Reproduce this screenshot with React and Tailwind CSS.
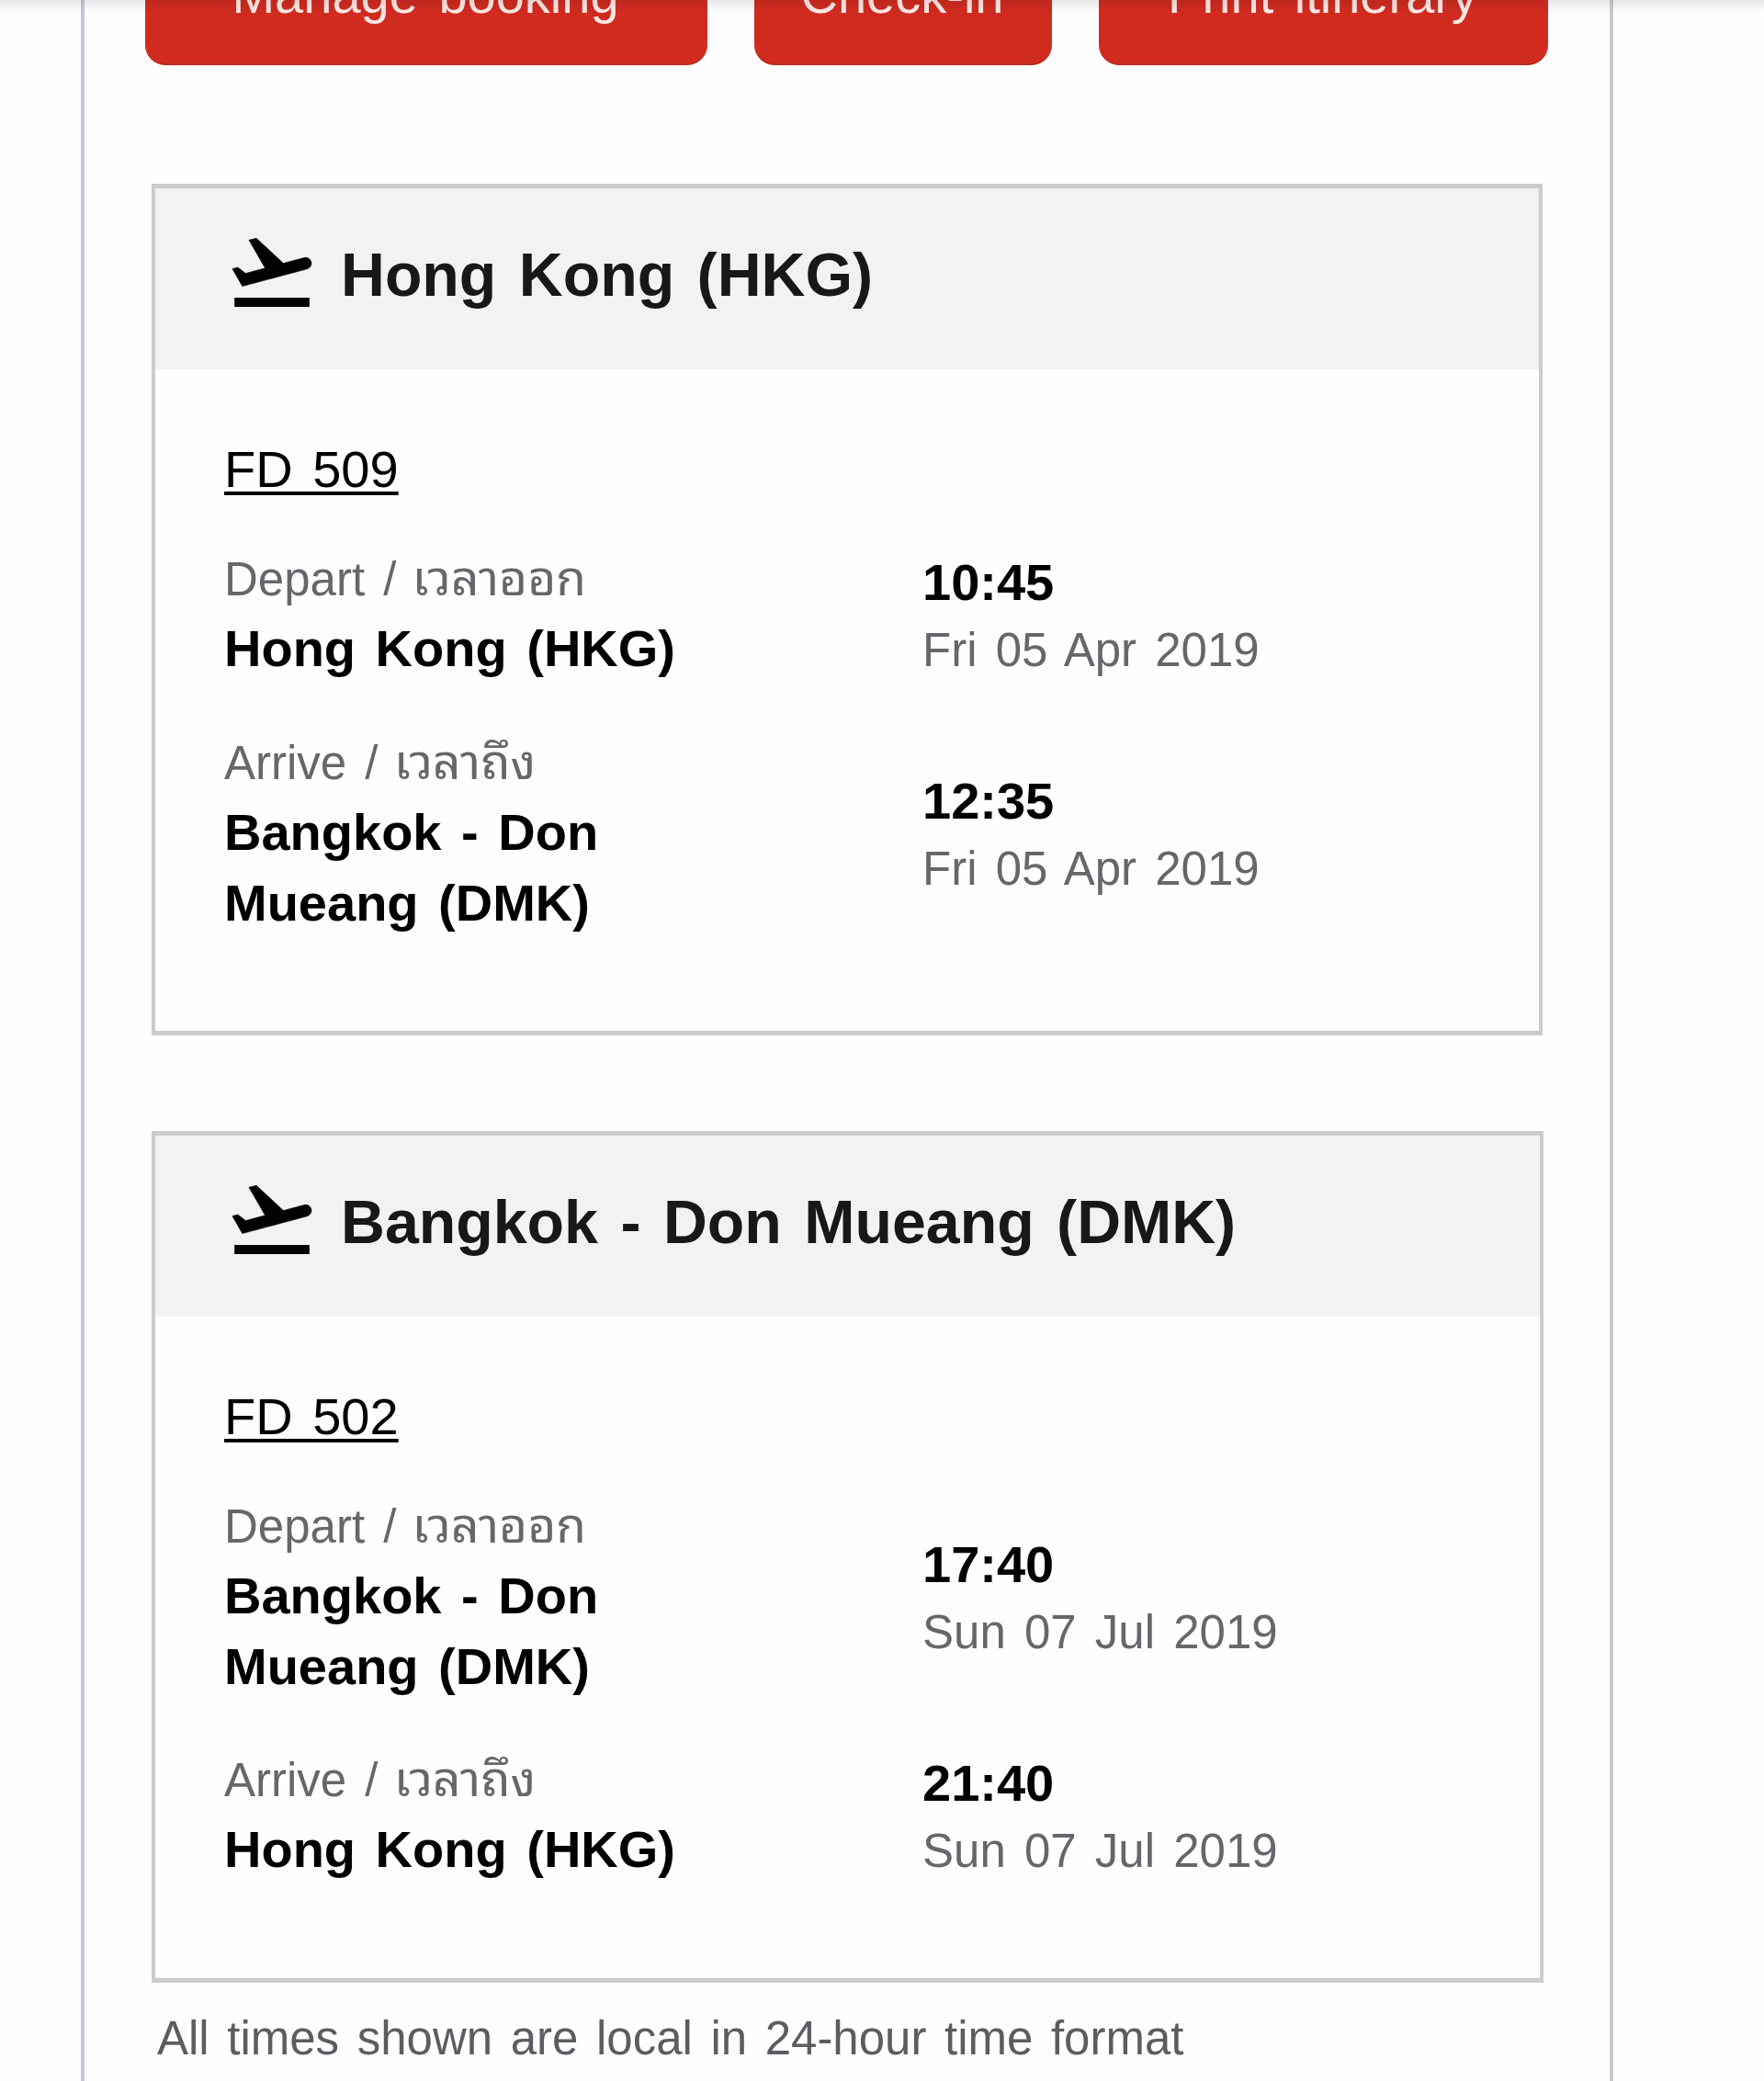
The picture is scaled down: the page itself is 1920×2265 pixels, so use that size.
const flights = [
  {
    origin: 'Hong Kong (HKG)',
    number: 'FD 509',
    width: 'w-[1514px]',
    depart: { place: 'Hong Kong (HKG)', time: '10:45', date: 'Fri 05 Apr 2019' },
    arrive: { place: 'Bangkok - Don Mueang (DMK)', time: '12:35', date: 'Fri 05 Apr 2019' },
  },
  {
    origin: 'Bangkok - Don Mueang (DMK)',
    number: 'FD 502',
    width: 'w-[1515px]',
    depart: { place: 'Bangkok - Don Mueang (DMK)', time: '17:40', date: 'Sun 07 Jul 2019' },
    arrive: { place: 'Hong Kong (HKG)', time: '21:40', date: 'Sun 07 Jul 2019' },
  },
];

const actions = [
  { label: 'Manage booking', width: 'w-[612px]' },
  { label: 'Check-in', width: 'w-[324px]' },
  { label: 'Print itinerary', width: 'w-[489px]' },
];

function TakeoffIcon() {
  return (
    <svg viewBox="0 0 24 24" className="w-[102px] h-[102px] mb-[17px] flex-shrink-0 fill-black">
      <path d="M2.4 18.8h19.2v2.4h-19.2z" />
      <path
        d="M22.07 9.64c-.21-.8-1.04-1.28-1.84-1.06L14.92 10l-6.9-6.43-1.93.51 4.14 7.17-4.97 1.33-1.97-1.54-1.45.39 2.59 4.49s7.12-1.9 16.57-4.43c.81-.23 1.28-1.05 1.07-1.85z"
        className="stroke-black [stroke-width:0.12]"
      />
    </svg>
  );
}

function Stop({ label, thai, stop }) {
  return (
    <div className="flex items-center">
      <div className="w-[760px] pr-[260px]">
        <div className="h-[76px] text-[51px] leading-[78px] text-[#66676b] whitespace-nowrap">
          {label} /{' '}
          <span className="-ml-[3px] text-[53.2px] leading-none font-['Noto_Sans_Thai_Looped','Loma','Garuda','Waree','Noto_Sans_Thai',sans-serif]">
            {thai}
          </span>
        </div>
        <div className="text-[56px] leading-[76.5px] font-bold text-black">{stop.place}</div>
      </div>
      <div className="pt-[6px] whitespace-nowrap">
        <div className="text-[56px] leading-[71px] font-bold text-black">{stop.time}</div>
        <div className="h-[76px] text-[51px] leading-[78px] text-[#66676b]">{stop.date}</div>
      </div>
    </div>
  );
}

function FlightCard({ flight }) {
  return (
    <section className={`${flight.width} h-[927px] border-x-4 border-y-[5px] border-[#cbcccd]`}>
      <header className="flex items-center h-[197px] pl-[76px] bg-[#f1f2f4]">
        <TakeoffIcon />
        <h2 className="ml-[24px] pb-[9px] text-[66.3px] leading-[80px] font-bold text-[#17181a] whitespace-nowrap">
          {flight.origin}
        </h2>
      </header>
      <div className="pt-[71px] pl-[75px]">
        <a className="block text-[56px] leading-[76px] text-black underline decoration-[4px] underline-offset-[5px]">
          {flight.number}
        </a>
        <div className="mt-[43px] flex flex-col gap-[47px]">
          <Stop label="Depart" thai="เวลาออก" stop={flight.depart} />
          <Stop label="Arrive" thai="เวลาถึง" stop={flight.arrive} />
        </div>
      </div>
    </section>
  );
}

export default function App() {
  return (
    <div className="relative w-[1920px] h-[2265px] overflow-hidden bg-[#fefefe] font-['Liberation_Sans','Noto_Sans_Thai','Noto_Sans',sans-serif] [word-spacing:6px]">
      <div className="ml-[88px] w-[1668px] h-full border-l-4 border-l-[#c6c7d8] border-r-4 border-r-[#c8cacf]">
        {/* Action buttons */}
        <div className="flex items-end h-[71px] pl-[66px] gap-[51px]">
          {actions.map((action) => (
            <button
              key={action.label}
              className={`${action.width} h-[142px] pr-[2px] pb-[9px] flex-shrink-0 rounded-[22px] border-b-2 border-[#b72a20] bg-[#d12b20] text-[56px] text-[#ffe9e6] whitespace-nowrap [word-spacing:7px]`}
            >
              {action.label}
            </button>
          ))}
        </div>

        {/* Flights */}
        <main className="mt-[129px] ml-[73px] flex flex-col gap-[104px]">
          {flights.map((flight) => (
            <FlightCard key={flight.number} flight={flight} />
          ))}
        </main>

        <p className="mt-[23px] ml-[79px] text-[51px] leading-[76px] text-[#5c5d61] whitespace-nowrap [word-spacing:5.4px]">
          All times shown are local in 24-hour time format
        </p>
      </div>

      {/* Shadow cast by the toolbar above */}
      <div className="absolute top-0 left-0 w-full h-[14px] bg-gradient-to-b from-black/9 to-transparent" />
    </div>
  );
}
